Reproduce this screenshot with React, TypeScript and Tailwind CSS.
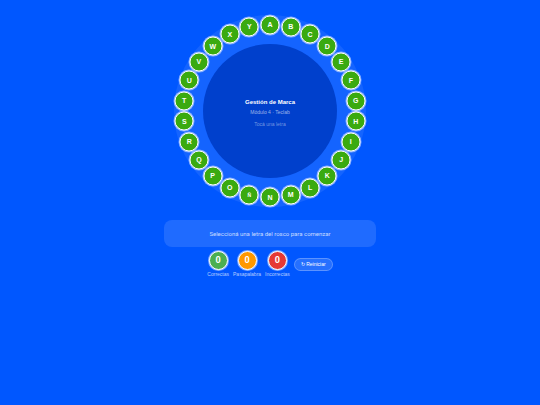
import clsx from 'clsx';
import {useState} from 'react';

const LETTERS = 'ABCDEFGHIJKLMNÑOPQRSTUVWXY'.split('');

// Distance from the centre of the wheel to the centre of a letter, in % of the wheel
const ORBIT = 45;

interface Score {
    label: string;
    value: number;
    color: string;
}

const SCORES: Score[] = [
    {label: 'Correctas', value: 0, color: 'bg-[#4caf50]'},
    {label: 'Pasapalabra', value: 0, color: 'bg-[#ff9800]'},
    {label: 'Incorrectas', value: 0, color: 'bg-[#e53935]'},
];

interface WheelProps {
    selected: string | null;
    onSelect: (letter: string) => void;
}

const Wheel = ({selected, onSelect}: WheelProps) => (
    <div className="relative grid size-48 place-items-center rounded-full bg-white/8">
        <div className="flex size-[134px] flex-col items-center justify-center rounded-full bg-[#0040cc] pt-1 text-center">
            <h1 className="text-[6px] leading-2 font-bold">Gestión de Marca</h1>
            <p className="mt-0.5 text-[5px] leading-2 text-white/60">Módulo 4 · Teclab</p>
            <p className="mt-1 text-[5px] leading-2 text-white/45">Tocá una letra</p>
        </div>
        {LETTERS.map((letter, index) => {
            const angle = (index / LETTERS.length) * 2 * Math.PI;
            return (
                <button
                    key={letter}
                    type="button"
                    onClick={() => onSelect(letter)}
                    className={clsx(
                        'absolute grid size-[19px] -translate-x-1/2 -translate-y-1/2 cursor-pointer place-items-center rounded-full border border-white bg-[#3aaa10] font-bold',
                        letter === 'Ñ' ? 'text-[5px]' : 'text-[7px]',
                        letter === selected ? 'ring-2 ring-white/80' : 'ring-1 ring-white/50',
                    )}
                    style={{
                        left: `${50 + ORBIT * Math.sin(angle)}%`,
                        top: `${50 - ORBIT * Math.cos(angle)}%`,
                    }}
                >
                    {letter}
                </button>
            );
        })}
    </div>
);

const ScoreBadge = ({label, value, color}: Score) => (
    <div className="flex flex-col items-center">
        <span
            className={clsx(
                'grid size-[19px] place-items-center rounded-full border border-white font-[family-name:Roboto,sans-serif] text-[9px] font-bold ring-1 ring-white/50',
                color,
            )}
        >
            {value}
        </span>
        <span className="text-[5px] leading-2 text-white/70">{label}</span>
    </div>
);

export default function App() {
    const [selected, setSelected] = useState<string | null>(null);

    return (
        <main className="flex min-h-screen flex-col items-center bg-[#0057ff] px-4 pt-[15px] font-['Liberation_Sans',Arial,sans-serif] text-white">
            <Wheel selected={selected} onSelect={setSelected} />
            <section className="mt-[13px] w-full max-w-[212px] rounded-lg bg-white/12 px-3 py-2 text-center">
                <p className="font-[family-name:Roboto,sans-serif] text-[6px] leading-[11px] text-white/75">
                    {selected ? `Letra ${selected}` : 'Seleccioná una letra del rosco para comenzar'}
                </p>
            </section>
            <div className="mt-1 flex items-center justify-center gap-1">
                {SCORES.map((score) => (
                    <ScoreBadge key={score.label} {...score} />
                ))}
                <button
                    type="button"
                    onClick={() => setSelected(null)}
                    className="cursor-pointer rounded-full border border-white/25 bg-white/15 px-1.5 text-[5px] leading-[11px] font-medium"
                >
                    ↻ Reiniciar
                </button>
            </div>
        </main>
    );
}
